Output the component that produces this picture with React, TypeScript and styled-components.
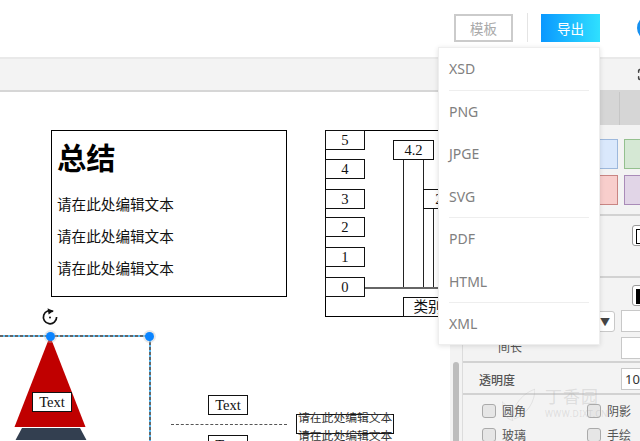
import React from "react";
import styled, { createGlobalStyle } from "styled-components";
import { Maximize } from "lucide-react";

const CJK = `"Noto Sans CJK SC", "Noto Sans", sans-serif`;
const SERIF = `"Liberation Serif", "Noto Sans CJK SC", serif`;

const GlobalStyle = createGlobalStyle`
  html, body {
    margin: 0;
    width: 640px;
    height: 441px;
    overflow: hidden;
    background: #fff;
  }
  * { box-sizing: border-box; }
`;

const Page = styled.div`
  position: relative;
  width: 640px;
  height: 441px;
  overflow: hidden;
  display: flex;
  flex-direction: column;
  font-family: ${CJK};
`;

const Header = styled.header`
  height: 57px;
  flex: none;
  display: flex;
  align-items: flex-start;
  padding: 14px 0 0 454px;
  background: #fff;
`;

const TemplateButton = styled.div`
  flex: none;
  width: 59px;
  height: 28px;
  border: 2px solid #cbcbcb;
  color: #a9a9a9;
  font-size: 13.5px;
  line-height: 25px;
  text-align: center;
`;

const HeaderDivider = styled.div`
  flex: none;
  width: 1px;
  height: 29px;
  margin: -1px 13px 0 14px;
  background: #e4e4e4;
`;

const ExportButton = styled.div`
  flex: none;
  width: 59px;
  height: 28px;
  background: linear-gradient(90deg, #0a98ff, #2fe0ff);
  color: #fff;
  font-size: 13.5px;
  line-height: 28px;
  text-align: center;
`;

const Avatar = styled.div`
  flex: none;
  width: 26px;
  height: 26px;
  margin: 1px 0 0 37px;
  border: 3px solid #1590f0;
  border-radius: 50%;
`;

const Toolbar = styled.div`
  height: 35px;
  flex: none;
  display: flex;
  justify-content: flex-end;
  align-items: center;
  background: #f3f3f3;
  border-top: 2px solid #e9e9e9;
  border-bottom: 2px solid #d6d6d6;
  color: #444;
  overflow: hidden;
`;

const ToolbarIcon = styled(Maximize)`
  flex: none;
  margin-right: -10px;
`;

const Workspace = styled.div`
  flex: 1;
  min-height: 0;
  display: flex;
`;

const Canvas = styled.main`
  position: relative;
  flex: 1;
  overflow: hidden;
  background: #fff;
`;

const SummaryCard = styled.section`
  position: absolute;
  left: 51px;
  top: 38px;
  width: 236px;
  height: 167px;
  border: 1px solid #000;
  padding: 0 5px;
`;

const SummaryTitle = styled.h2`
  margin: 4px 0 16px;
  font-size: 29.3px;
  line-height: 42px;
  font-weight: 700;
  color: #000;
`;

const SummaryLine = styled.p`
  margin: 0 0 11px;
  font-size: 14.6px;
  line-height: 21px;
  color: #111;
`;

const ChartFrame = styled.div`
  position: absolute;
  left: 325px;
  top: 38px;
  width: 140px;
  height: 187px;
  border: 1px solid #000;
`;

const Label = styled.div<{ $x: number; $y: number; $w: number; $h?: number }>`
  position: absolute;
  left: ${(p) => p.$x}px;
  top: ${(p) => p.$y}px;
  width: ${(p) => p.$w}px;
  height: ${(p) => p.$h ?? 20}px;
  border: 1px solid #111;
  background: #fff;
  font-family: ${SERIF};
  font-size: 14.6px;
  line-height: 19px;
  text-align: center;
  color: #111;
  white-space: nowrap;
`;

const Bar = styled.div<{ $x: number; $y: number; $w: number; $h: number }>`
  position: absolute;
  left: ${(p) => p.$x}px;
  top: ${(p) => p.$y}px;
  width: ${(p) => p.$w}px;
  height: ${(p) => p.$h}px;
  border: 1px solid #222;
  border-bottom: none;
`;

const Baseline = styled.div`
  position: absolute;
  left: 364px;
  top: 195px;
  width: 90px;
  height: 2px;
  background: #666;
`;

const Pyramid = styled.svg`
  position: absolute;
  left: 0;
  top: 244px;
`;

const SelectionTop = styled.div`
  position: absolute;
  left: 0;
  top: 243px;
  width: 150px;
  height: 2px;
  background: repeating-linear-gradient(90deg, #666 0 3px, #5bbcf5 3px 5px);
`;

const SelectionRight = styled.div`
  position: absolute;
  left: 149px;
  top: 245px;
  width: 2px;
  height: 110px;
  background: repeating-linear-gradient(180deg, #666 0 3px, #5bbcf5 3px 5px);
`;

const Handle = styled.div<{ $x: number }>`
  position: absolute;
  left: ${(p) => p.$x - 4}px;
  top: 240px;
  width: 9px;
  height: 9px;
  border-radius: 50%;
  background: #0a84ff;
  box-shadow: 0 0 0 2px rgba(190, 190, 190, 0.35);
`;

const RotateIcon = styled.svg`
  position: absolute;
  left: 41px;
  top: 214px;
`;

const DashedRule = styled.div`
  position: absolute;
  left: 171px;
  top: 332px;
  width: 116px;
  border-top: 1px dashed #555;
`;

const FloatingText = styled.div<{ $y: number }>`
  position: absolute;
  left: 298px;
  top: ${(p) => p.$y}px;
  font-size: 11.8px;
  line-height: 18px;
  color: #333;
  white-space: nowrap;
`;

const OutlineBox = styled.div`
  position: absolute;
  left: 296px;
  top: 322px;
  width: 98px;
  height: 20px;
  border: 1px solid #111;
`;

const Panel = styled.aside`
  flex: none;
  width: 190px;
  display: flex;
  flex-direction: column;
  background: #f3f3f3;
`;

const Tabs = styled.div`
  height: 33px;
  flex: none;
  display: flex;
  justify-content: flex-end;
  background: #d6d6d6;
`;

const Tab = styled.div`
  width: 21px;
  border-left: 1px solid #c6c6c6;
`;

const PanelBody = styled.div`
  flex: 1;
  display: flex;
  min-height: 0;
`;

const ScrollTrack = styled.div`
  flex: none;
  width: 12px;
  padding: 237px 3px 0;
`;

const ScrollThumb = styled.div`
  width: 6px;
  height: 100px;
  border-radius: 3px;
  background: #bdbdbd;
`;

const Sections = styled.div`
  flex: 1;
  min-width: 0;
  border-left: 1px solid #dcdcdc;
  color: #555;
  font-size: 12px;
`;

const Section = styled.div<{ $h: number; $pad?: number }>`
  height: ${(p) => p.$h}px;
  padding-top: ${(p) => p.$pad ?? 0}px;
  border-bottom: 2px solid #d2d2d2;
`;

const SwatchGrid = styled.div`
  display: grid;
  grid-template-columns: repeat(3, 44px);
  gap: 6px;
  padding: 14px 0 0 111px;
`;

const Swatch = styled.div<{ $bg: string; $line: string }>`
  height: 30px;
  background: ${(p) => p.$bg};
  border: 1.5px solid ${(p) => p.$line};
`;

const MiniButtonRow = styled.div<{ $pad: number }>`
  display: flex;
  padding: ${(p) => p.$pad}px 0 0 169px;
`;

const MiniButton = styled.div<{ $fill?: boolean }>`
  flex: none;
  width: 24px;
  height: 21px;
  padding: 3px;
  border: 1px solid #999;
  border-radius: 3px;
  background: #fff;

  &::after {
    content: "";
    display: block;
    width: 100%;
    height: 100%;
    border: 1px solid #000;
    background: ${(p) => (p.$fill ? "#000" : "#fff")};
  }
`;

const FieldRow = styled.div<{ $top: number; $left?: number }>`
  display: flex;
  align-items: center;
  height: 22px;
  margin-top: ${(p) => p.$top}px;
  padding-left: ${(p) => p.$left ?? 36}px;
`;

const SelectBox = styled.div`
  flex: none;
  width: 116px;
  height: 21px;
  margin-right: 6px;
  padding-right: 4px;
  border: 1px solid #c8c8c8;
  border-radius: 3px;
  background: #fff;
  display: flex;
  justify-content: flex-end;
  align-items: center;
  color: #444;
  font-size: 10px;
`;

const NumberBox = styled.div`
  flex: none;
  width: 40px;
  height: 22px;
  border: 1px solid #c8c8c8;
  background: #fff;
  font-family: "Noto Sans", sans-serif;
  font-size: 13px;
  line-height: 20px;
  padding-left: 3px;
  color: #333;
`;

const RowLabel = styled.span<{ $w: number; $strong?: boolean }>`
  width: ${(p) => p.$w}px;
  flex: none;
  font-weight: ${(p) => (p.$strong ? 500 : 400)};
`;

const GapLabel = styled(RowLabel)`
  margin: -4px 0 0 -1px;
`;

const OptionGrid = styled.div`
  display: grid;
  grid-template-columns: 105px 60px;
  row-gap: 11px;
  padding: 9px 0 0 19px;
`;

const Option = styled.div`
  display: flex;
  align-items: center;
  gap: 6px;
  height: 13px;
  font-size: 12px;
  color: #555;

  &::before {
    content: "";
    flex: none;
    width: 12px;
    height: 12px;
    border: 1px solid #aaa;
    border-radius: 3px;
    background: #e6e6e6;
  }
`;

const Watermark = styled.div`
  position: absolute;
  left: 502px;
  top: 384px;
  width: 106px;
  height: 48px;
  display: flex;
  gap: 10px;
  pointer-events: none;
  color: rgba(170, 170, 170, 0.3);
`;

const WatermarkText = styled.div`
  display: flex;
  flex-direction: column;
  font-family: "Noto Sans", sans-serif;
`;

const WatermarkTitle = styled.span`
  font-size: 17px;
  line-height: 24px;
  letter-spacing: 1px;
  font-family: ${CJK};
`;

const WatermarkUrl = styled.span`
  font-size: 8.5px;
  line-height: 12px;
  letter-spacing: 0.5px;
`;

const Menu = styled.nav`
  position: absolute;
  left: 438px;
  top: 47px;
  width: 162px;
  height: 298px;
  padding: 0 10px;
  background: #fff;
  border: 1px solid #eee;
  box-shadow: 0 1px 5px rgba(0, 0, 0, 0.12);
`;

const MenuItem = styled.div<{ $divided?: boolean }>`
  height: 42.5px;
  line-height: 42px;
  font-family: "Noto Sans", sans-serif;
  font-size: 14px;
  color: #808080;
  border-bottom: ${(p) => (p.$divided ? "1px solid #eeeeee" : "none")};
`;

const ticks = [
  { v: "5", y: 38 },
  { v: "4", y: 67 },
  { v: "3", y: 97 },
  { v: "2", y: 125 },
  { v: "1", y: 155 },
  { v: "0", y: 185 },
];

const menu = [
  { name: "XSD", divided: true },
  { name: "PNG" },
  { name: "JPGE" },
  { name: "SVG", divided: true },
  { name: "PDF" },
  { name: "HTML", divided: true },
  { name: "XML" },
];

export default function App() {
  return (
    <Page>
      <GlobalStyle />
      <Header>
        <TemplateButton>模板</TemplateButton>
        <HeaderDivider />
        <ExportButton>导出</ExportButton>
        <Avatar />
      </Header>
      <Toolbar>
        <ToolbarIcon size={13} strokeWidth={2.8} />
      </Toolbar>
      <Workspace>
        <Canvas>
          <SummaryCard>
            <SummaryTitle>总结</SummaryTitle>
            <SummaryLine>请在此处编辑文本</SummaryLine>
            <SummaryLine>请在此处编辑文本</SummaryLine>
            <SummaryLine>请在此处编辑文本</SummaryLine>
          </SummaryCard>

          <ChartFrame />
          <Bar $x={403} $y={67} $w={21} $h={129} />
          <Bar $x={433} $y={116} $w={20} $h={80} />
          <Baseline />
          {ticks.map((t) => (
            <Label key={t.v} $x={325} $y={t.y} $w={40}>
              {t.v}
            </Label>
          ))}
          <Label $x={393} $y={48} $w={41}>
            4.2
          </Label>
          <Label $x={423} $y={97} $w={32}>
            2
          </Label>
          <Label $x={403} $y={205} $w={50}>
            类别
          </Label>

          <Pyramid width="100" height="104" viewBox="0 0 100 104">
            <polygon points="50,0 85.5,91 14.5,91" fill="#c00000" />
            <polygon points="22,92 80,92 87,105 15,105" fill="#333f50" />
          </Pyramid>
          <Label $x={32} $y={300} $w={40}>
            Text
          </Label>
          <SelectionTop />
          <SelectionRight />
          <Handle $x={50} />
          <Handle $x={149} />
          <RotateIcon width="18" height="20" viewBox="0 0 18 20">
            <path
              d="M12.2 5.4A6.6 6.6 0 1 0 15.6 11"
              fill="none"
              stroke="#111"
              strokeWidth="1.7"
            />
            <path d="M6.6 2.2l5.6 3-4.6 3.4z" fill="#111" />
            <circle cx="9" cy="11.5" r="1" fill="#111" />
          </RotateIcon>

          <Label $x={208} $y={303} $w={40}>
            Text
          </Label>
          <DashedRule />
          <Label $x={208} $y={343} $w={40}>
            Text
          </Label>
          <OutlineBox />
          <FloatingText $y={316}>请在此处编辑文本</FloatingText>
          <FloatingText $y={334}>请在此处编辑文本</FloatingText>
        </Canvas>

        <Panel>
          <Tabs>
            <Tab />
          </Tabs>
          <PanelBody>
            <ScrollTrack>
              <ScrollThumb />
            </ScrollTrack>
            <Sections>
              <Section $h={91}>
                <SwatchGrid>
                  <Swatch $bg="#dae8fc" $line="#9db8dc" />
                  <Swatch $bg="#d5e8d4" $line="#94c08e" />
                  <Swatch $bg="#fff2cc" $line="#d6b656" />
                  <Swatch $bg="#f8cecc" $line="#c98583" />
                  <Swatch $bg="#e1d5e7" $line="#a98bb8" />
                  <Swatch $bg="#f5f5f5" $line="#999" />
                </SwatchGrid>
              </Section>
              <Section $h={62}>
                <MiniButtonRow $pad={9}>
                  <MiniButton />
                </MiniButtonRow>
              </Section>
              <Section $h={85}>
                <MiniButtonRow $pad={7}>
                  <MiniButton $fill />
                </MiniButtonRow>
                <FieldRow $top={4}>
                  <SelectBox>▼</SelectBox>
                  <NumberBox />
                </FieldRow>
                <FieldRow $top={5}>
                  <GapLabel $w={123}>间长</GapLabel>
                  <NumberBox />
                </FieldRow>
              </Section>
              <Section $h={32} $pad={5}>
                <FieldRow $top={0} $left={16}>
                  <RowLabel $w={142} $strong>
                    透明度
                  </RowLabel>
                  <NumberBox>100</NumberBox>
                </FieldRow>
              </Section>
              <OptionGrid>
                <Option>圆角</Option>
                <Option>阴影</Option>
                <Option>玻璃</Option>
                <Option>手绘</Option>
              </OptionGrid>
            </Sections>
          </PanelBody>
        </Panel>
      </Workspace>

      <Menu>
        {menu.map((m) => (
          <MenuItem key={m.name} $divided={m.divided}>
            {m.name}
          </MenuItem>
        ))}
      </Menu>

      <Watermark>
        <svg width="42" height="48" viewBox="0 0 42 48" fill="none" stroke="currentColor">
          <path d="M16 38C10 26 24 6 42 0C42 16 32 32 16 38Z" />
          <path d="M14 40C10 28 6 20 0 16C0 28 4 38 14 40Z" />
        </svg>
        <WatermarkText>
          <WatermarkTitle>丁香园</WatermarkTitle>
          <WatermarkUrl>WWW.DIXT.CN</WatermarkUrl>
        </WatermarkText>
      </Watermark>
    </Page>
  );
}
